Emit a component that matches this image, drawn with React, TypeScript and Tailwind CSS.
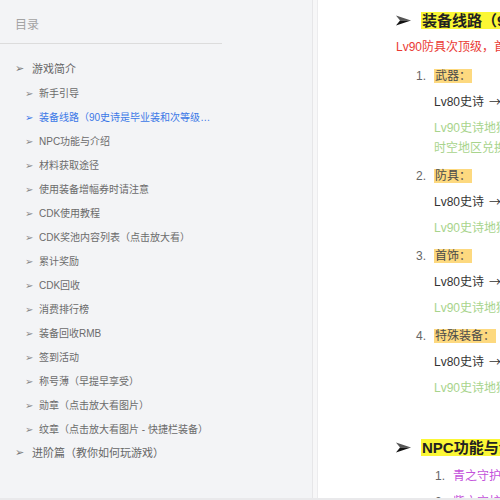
import React from "react";

const FONT = { fontFamily: '"Liberation Sans", "Noto Sans CJK SC", sans-serif' };

const subItems = [
  "新手引导",
  "装备线路（90史诗是毕业装和次等级装备的过渡）",
  "NPC功能与介绍",
  "材料获取途径",
  "使用装备增幅券时请注意",
  "CDK使用教程",
  "CDK奖池内容列表（点击放大看）",
  "累计奖励",
  "CDK回收",
  "消费排行榜",
  "装备回收RMB",
  "签到活动",
  "称号薄（早提早享受）",
  "勋章（点击放大看图片）",
  "纹章（点击放大看图片 - 快捷栏装备）",
];

function Arrow({ className }: { className: string }) {
  return <span className={`shrink-0 ${className}`} style={{ fontFamily: '"DejaVu Sans", sans-serif' }}>➢</span>;
}

function HeadArrow() {
  return (
    <span className="shrink-0 w-[25px] flex items-center">
      <svg width="15" height="11" viewBox="0 0 15 11">
        <polygon points="0,0.5 15,5.5 4,5.5" fill="#555" />
        <polygon points="0,10.5 15,5.5 4,5.5" fill="#111" />
      </svg>
    </span>
  );
}

function Sidebar() {
  return (
    <div className="flex h-full shrink-0">
      <div className="w-[312px] h-full bg-[#f3f4f6] pt-[15px]">
        <div className="h-[20px] flex items-center pl-[15px] text-[12px] text-[#a3a3a3]">目录</div>
        <div className="mt-[8px] w-[222px] border-t border-[#dcdcdc]" />
        <div className="mt-[13px] w-[222px]">
          <div className="h-[24px] flex items-center pl-[15px] text-[11px] text-[#666]">
            <Arrow className="text-[11px] text-[#777] w-[17px]" />
            <span>游戏简介</span>
          </div>
          {subItems.map((t, i) => (
            <div
              key={i}
              className={`h-[24px] flex items-center pl-[25px] text-[10px] ${i === 1 ? "text-[#3b78e7]" : "text-[#6b6b6b]"}`}
            >
              <Arrow className={`text-[10px] w-[14px] ${i === 1 ? "text-[#3b78e7]" : "text-[#888]"}`} />
              <span className="max-w-[176px] truncate">{t}</span>
            </div>
          ))}
          <div className="h-[24px] flex items-center pl-[15px] text-[11px] text-[#666]">
            <Arrow className="text-[11px] text-[#777] w-[17px]" />
            <span>进阶篇（教你如何玩游戏）</span>
          </div>
        </div>
      </div>
      <div className="w-[6px] h-full bg-[#f7f7f8] border-l border-[#e6e6e8] border-r border-r-[#ececee]" />
    </div>
  );
}

function Item({ n, title, green }: { n: string; title: string; green: React.ReactNode }) {
  return (
    <div className="pb-[5px]">
      <div className="h-[26px] flex items-center">
        <span className="shrink-0 w-[18px] text-[12px] text-[#666]">{n}.</span>
        <span className="shrink-0 bg-[#fdd97f] text-[12px] text-[#4a4a4a] px-[1px] leading-[14px]">{title}</span>
      </div>
      <div className="h-[26px] flex items-center pl-[18px] text-[12px] text-[#333]">
        <span className="shrink-0">Lv80史诗</span>
        <span className="shrink-0 ml-[5px]" style={{ fontFamily: '"Noto Sans CJK SC", sans-serif' }}>→</span>
        <span className="shrink-0 ml-[5px]">Lv85传说装备</span>
      </div>
      <div className="pt-[3px] pl-[18px] text-[12px] leading-[20px] text-[#a8d48c]">{green}</div>
    </div>
  );
}

function Main() {
  return (
    <div className="flex-1 min-w-0 h-full bg-white overflow-hidden whitespace-nowrap pl-[78px] pt-[6px]">
      <div className="h-[28px] flex items-center">
        <HeadArrow />
        <span className="shrink-0 bg-[#fbf735] text-[15px] font-bold text-[#222] leading-[17px] px-[1px]">装备线路（90史诗是毕业装和次等级装备）</span>
      </div>
      <div className="h-[26px] flex items-center text-[12px] text-[#ea3a34]">
        <span className="shrink-0">Lv90防具次顶级，首饰和特殊装备为毕业装备</span>
      </div>
      <div className="mt-[3px] pl-[20px]">
        <Item n="1" title="武器：" green={<>Lv90史诗地狱装备<br />时空地区兑换获得</>} />
        <Item n="2" title="防具：" green={<>Lv90史诗地狱装备</>} />
        <Item n="3" title="首饰：" green={<>Lv90史诗地狱装备</>} />
        <Item n="4" title="特殊装备：" green={<>Lv90史诗地狱装备</>} />
      </div>
      <div className="mt-[30px] h-[28px] flex items-center">
        <HeadArrow />
        <span className="shrink-0 bg-[#fbf735] text-[15px] font-bold text-[#222] leading-[17px] px-[1px]">NPC功能与介绍</span>
      </div>
      <div className="mt-[2px] pl-[39px]">
        <div className="h-[26px] flex items-center text-[12px]">
          <span className="shrink-0 w-[18px] text-[#666]">1.</span>
          <span className="shrink-0 text-[#c453db]">青之守护者：</span>
        </div>
        <div className="h-[26px] flex items-center text-[12px]">
          <span className="shrink-0 w-[18px] text-[#666]">2.</span>
          <span className="shrink-0 text-[#c453db]">紫之守护者：</span>
        </div>
      </div>
    </div>
  );
}

export default function App() {
  return (
    <div className="w-[500px] h-[500px] overflow-hidden flex flex-col" style={FONT}>
      <div className="flex flex-1 min-h-0">
        <Sidebar />
        <Main />
      </div>
      <div className="h-[2px] bg-[#e9e9eb] shrink-0" />
    </div>
  );
}
